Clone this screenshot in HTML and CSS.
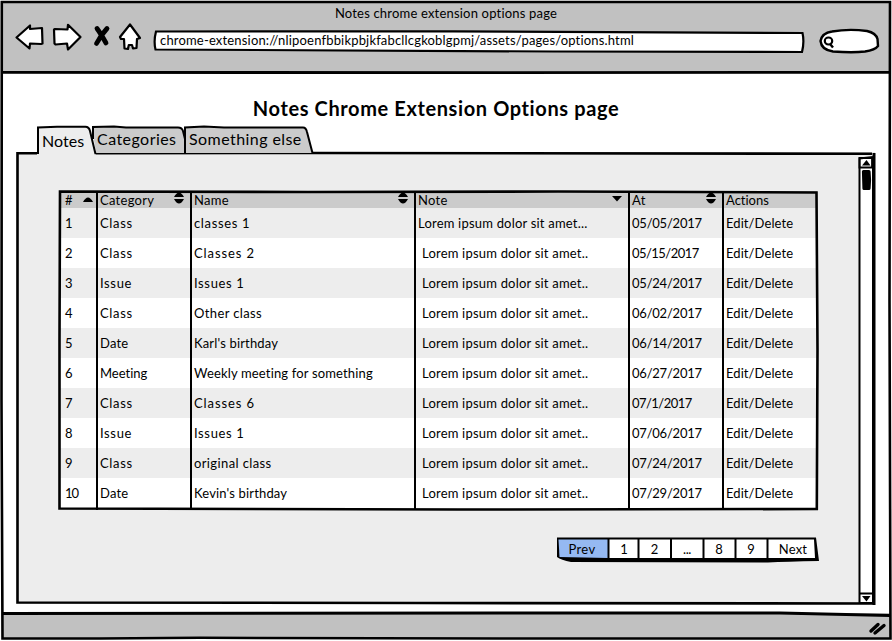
FILE: index.html
```html
<!DOCTYPE html>
<html lang="en">
<head>
<meta charset="utf-8">
<title>Notes chrome extension options page</title>
<link rel="stylesheet" href="styles.css">
</head>
<body>
<div class="window">
  <header class="chrome">
    <div class="chrome-title">Notes chrome extension options page</div>
    <div class="toolbar">
      <svg class="nav" width="130" height="30" viewBox="0 0 130 30">
        <g fill="#fff" stroke="#000" stroke-width="2.2" stroke-linejoin="round">
          <path d="M1.500 14.500 15 2.500 15 6 27 5 27.500 20.500 26 21 15 20.500 14.500 25.500 Z"/>
          <path d="M39 6.500 39.500 20.500 40.500 21.500 52 20.500 53 26.500 65.500 14 53 1.800 52.500 6.500 40 6 Z"/>
          <path d="M115 1.500 105 14 106 16 109 16 109.500 25.500 113 26 113.800 22 117 22 118 25.500 121.500 25 122 16 125 15 Z"/>
        </g>
        <path d="M82 5.500Q86 11 91 20M92 5.500Q86 12 81.500 20.500" fill="none" stroke="#000" stroke-width="4.800" stroke-linecap="round"/>
      </svg>
      <div class="url">
        <svg class="sketch" width="652" height="24" viewBox="0 0 652 24">
          <path d="M3 1.500 300 1.300 649.500 3Q651.500 12 649 22L400 21.500 2.500 19.500Q.5 11 3 1.500Z" fill="#fff" stroke="#000" stroke-width="2.200"/>
        </svg>
        <span class="url-text">chrome-extension://nlipoenfbbikpbjkfabcllcgkoblgpmj/assets/pages/options.html</span>
      </div>
      <svg class="search" width="62" height="26" viewBox="0 0 62 26">
        <path d="M13 3.500Q30 .5 48 3 57 5 58.500 11L59 18Q56 22 46 23.500 34 25 14 23.500 2.500 22 1.500 13 3 5 13 3.500Z" fill="#fff" stroke="#000" stroke-width="2.400"/>
        <ellipse cx="9.500" cy="13" rx="3.700" ry="3.500" fill="none" stroke="#000" stroke-width="2.200"/>
        <path d="M11 16 14 19.500" stroke="#000" stroke-width="2.400"/>
      </svg>
    </div>
  </header>
  <main class="page">
    <h1>Notes Chrome Extension Options page</h1>
    <nav class="tabs">
      <a class="tab tab-notes">
        <svg class="sketch" width="59" height="31" viewBox="0 0 59 31"><path d="M1 31V1.500L20 .5H48Q52 .5 53 5L58.500 27V31Z" fill="#ededed"/><path d="M1 28V1.500L20 .7H48Q52 .5 53 5L58.500 28" fill="none" stroke="#000" stroke-width="2"/></svg>
        <span class="tab-label">Notes</span>
      </a>
      <a class="tab tab-categories">
        <svg class="sketch" width="95" height="31" viewBox="0 0 95 31"><path d="M1 8V1L22 .5 34 1.500H86Q90 1.500 91 5L93 17V27H4Z" fill="#cbcbcb"/><path d="M1 13V1L22 .5 34 1.500H86Q90 1.500 91 5L94 17" fill="none" stroke="#000" stroke-width="2"/></svg>
        <span class="tab-label">Categories</span>
      </a>
      <a class="tab tab-else">
        <svg class="sketch" width="130" height="31" viewBox="0 0 130 31"><path d="M1 27V1.500L20 .5 40 1.500H119Q122 1.500 123 6L128.500 27" fill="#cbcbcb" stroke="#000" stroke-width="2"/></svg>
        <span class="tab-label">Something else</span>
      </a>
    </nav>
    <section class="panel">
      <svg class="sketch panel-frame" width="859" height="453" viewBox="0 0 859 453">
        <path d="M21 1.300H1.500V450.500L400 451 858 451.500M76 1.200 300 1 856 1.800" fill="none" stroke="#000" stroke-width="2.600"/>
        <path d="M858 1V453" stroke="#000" stroke-width="3"/>
      </svg>
      <div class="content">
        <div class="table">
          <div class="row head">
            <span>#<svg class="sort" width="10" height="5"><path d="M0 5Q5 -4 10 5Z"/></svg></span>
            <span>Category<svg class="sort both" width="10" height="12"><path d="M0 5Q5 -4 10 5ZM0 7H10Q5 16 0 7Z"/></svg></span>
            <span>Name<svg class="sort both" width="10" height="12"><path d="M0 5Q5 -4 10 5ZM0 7H10Q5 16 0 7Z"/></svg></span>
            <span>Note<svg class="sort down" width="10" height="5"><path d="M0 0H10L5 5.500Z"/></svg></span>
            <span>At<svg class="sort both" width="10" height="12"><path d="M0 5Q5 -4 10 5ZM0 7H10Q5 16 0 7Z"/></svg></span>
            <span class="plain">Actions</span>
          </div>
          <div class="row"><span>1</span><span class="wide">Class</span><span class="wide">classes 1</span><span class="first-note">Lorem ipsum dolor sit amet...</span><span>05/05/2017</span><span>Edit/Delete</span></div>
          <div class="row"><span>2</span><span class="wide">Class</span><span class="wide wider">Classes 2</span><span>Lorem ipsum dolor sit amet..</span><span class="tight">05/15/2017</span><span>Edit/Delete</span></div>
          <div class="row"><span>3</span><span class="wide">Issue</span><span class="wide">Issues 1</span><span>Lorem ipsum dolor sit amet..</span><span>05/24/2017</span><span>Edit/Delete</span></div>
          <div class="row"><span>4</span><span class="wide">Class</span><span class="mid">Other class</span><span>Lorem ipsum dolor sit amet..</span><span>06/02/2017</span><span>Edit/Delete</span></div>
          <div class="row"><span>5</span><span>Date</span><span class="name">Karl's birthday</span><span>Lorem ipsum dolor sit amet..</span><span>06/14/2017</span><span>Edit/Delete</span></div>
          <div class="row"><span>6</span><span class="meeting">Meeting</span><span class="name">Weekly meeting for something</span><span>Lorem ipsum dolor sit amet..</span><span>06/27/2017</span><span>Edit/Delete</span></div>
          <div class="row"><span>7</span><span class="wide">Class</span><span class="wide wider">Classes 6</span><span>Lorem ipsum dolor sit amet..</span><span class="tight">07/1/2017</span><span>Edit/Delete</span></div>
          <div class="row"><span>8</span><span class="wide">Issue</span><span class="wide">Issues 1</span><span>Lorem ipsum dolor sit amet..</span><span>07/06/2017</span><span>Edit/Delete</span></div>
          <div class="row"><span>9</span><span class="wide">Class</span><span class="mid">original class</span><span>Lorem ipsum dolor sit amet..</span><span>07/24/2017</span><span>Edit/Delete</span></div>
          <div class="row"><span class="ten">10</span><span>Date</span><span class="name">Kevin's birthday</span><span>Lorem ipsum dolor sit amet..</span><span>07/29/2017</span><span>Edit/Delete</span></div>
          <svg class="sketch table-frame" width="761" height="321" viewBox="0 0 761 321">
            <g fill="none" stroke="#000">
              <path d="M2 1.500 250 2 500 1.500 758.500 2.500 759.500 160 758.800 319 400 319.500 1.500 318.500V150Z" stroke-width="2.600"/>
              <path d="M39 2V320M133 2V320M357 2V320M571 2V320M665 2V320" stroke-width="2"/>
            </g>
          </svg>
        </div>
        <div class="pager">
          <svg class="sketch" width="263" height="27" viewBox="0 0 263 27">
            <path d="M1 1.500H260L263 25Q230 25.500 212 26.500L15 26Q5 24 1 21Z"/>
            <path d="M2.500 3.500H51.500V22L3.500 21Z" fill="#95b9f2"/>
            <path d="M53.500 3.500H81.500V22H53.500ZM83.500 3.500H114V22H83.500ZM116 3.500H146.500V22H116ZM148.500 3.500H178.500V22H148.500ZM180.500 3.500H210.500V22H180.500ZM212.500 3.500H258L259 22H212.500Z" fill="#fff"/>
          </svg>
          <span>Prev</span><span>1</span><span>2</span><span class="gap">...</span><span>8</span><span>9</span><span>Next</span>
        </div>
      </div>
      <svg class="scrollbar" width="17" height="448" viewBox="0 0 17 448">
        <path d="M1.500 1V446H15V1Z" fill="#fff" stroke="#000" stroke-width="2"/>
        <path d="M1.500 1.500 14 0V10.500H1.500ZM1.500 436.500H14" fill="none" stroke="#000" stroke-width="1.800"/>
        <path d="M4 8.500 8.500 3 12.500 8.500Z"/>
        <path d="M5.500 14.500 11 14.500 11.500 23 11 31.500 6 31.500Z" stroke="#000" stroke-width="3.200" stroke-linejoin="round"/>
        <path d="M4 439H12.500L8.500 444.500Z"/>
      </svg>
    </section>
  </main>
  <footer class="status">
    <svg width="20" height="14" viewBox="0 0 20 14"><path d="M3 9 10 2.500M7 11 16 3.500" stroke="#000" stroke-width="3.400" stroke-linecap="round"/></svg>
  </footer>
  <svg class="sketch window-frame" width="892" height="641" viewBox="0 0 892 641">
    <g fill="none" stroke="#000">
      <path d="M1.800 2H890L889.500 300 890.500 638.500 500 638.500 200 637.800 100 638.500H2.500L1.500 400Z" stroke-width="2.600"/>
      <path d="M2 72.300 500 72.700 890 72.300" stroke-width="2.800"/>
      <path d="M2 613.500 500 613 780 613 890 615.500" stroke-width="2.800"/>
    </g>
  </svg>
</div>
</body>
</html>
```
FILE: styles.css
```css
* { box-sizing: border-box; }

body {
  margin: 0;
  background: #fff;
  color: #000;
  font: 13px/16px Lato, "Open Sans", sans-serif;
  letter-spacing: .2px;
  font-variant-ligatures: none;
}

.window {
  position: relative;
  display: flex;
  flex-direction: column;
  width: 892px;
  height: 641px;
  padding: 2px 2px 3px;
  overflow: hidden;
}

/* Hand-drawn outlines lie over or under the boxes they belong to. */
.sketch { position: absolute; left: 0; top: 0; pointer-events: none; }
svg { display: block; flex: none; overflow: visible; }

/* Browser chrome */
.chrome { height: 70px; background: #c1c1c1; }
.chrome-title { padding-top: 3px; text-align: center; letter-spacing: .19px; }
.toolbar { display: flex; align-items: flex-start; padding-left: 13px; }
.nav { margin-top: 2px; }
.url { position: relative; width: 652px; height: 24px; margin: 9px 0 0 8px; }
.url-text { position: relative; display: block; padding: 2px 0 0 7px; white-space: nowrap; letter-spacing: .175px; }
.search { margin: 7px 0 0 14px; }

/* Page */
.page { display: flex; flex-direction: column; height: 541px; }
h1 { margin: 24px 0 0; padding-right: 20px; font-size: 20px; line-height: 24px; text-align: center; letter-spacing: .61px; }
.tabs { display: flex; margin: 6px 0 0 35px; height: 26px; position: relative; z-index: 1; }
.tab { position: relative; font-size: 16px; line-height: 20px; }
.tab-label { position: relative; white-space: nowrap; }
.tab-notes { width: 55px; padding: 5px 0 0 5px; z-index: 1; letter-spacing: .05px; }
.tab-categories { width: 92px; padding: 3px 0 0 5px; letter-spacing: .45px; }
.tab-else { width: 130px; padding: 3px 0 0 5px; letter-spacing: .43px; }
.panel { position: relative; display: flex; width: 859px; height: 452px; margin-left: 14px; background: #ededed; }
.content { width: 842px; padding: 38px 0 0 42px; }
.scrollbar { margin-top: 5px; position: relative; }

/* Notes table */
.table { position: relative; width: 761px; height: 321px; padding: 1px 2px 0 1px; }
.row { display: grid; grid-template-columns: 38px 94px 224px 214px 94px 94px; height: 30px; line-height: 30px; background: #fff; }
.row span { padding-left: 3px; white-space: nowrap; }
.row span:nth-child(1) { padding-left: 6px; }
.row span:nth-child(4) { padding-left: 7px; }
.row span:nth-child(5) { letter-spacing: -.22px; }
.row span:nth-child(6) { letter-spacing: .08px; }
.row span.wide { letter-spacing: .65px; }
.row span.wider { letter-spacing: .9px; }
.row span.mid { letter-spacing: .38px; }
.row span.name { letter-spacing: .16px; }
.row span.meeting { letter-spacing: 0; }
.row span.tight { letter-spacing: -.54px; }
.row span.ten { letter-spacing: -1px; }
.row span.first-note { padding-left: 3px; }
.row:nth-child(even) { background: #ededed; }
.row.head { height: 17px; line-height: 18px; background: #cbcbcb; }
.row.head span { display: flex; justify-content: space-between; align-items: flex-start; padding-right: 7px; letter-spacing: .28px; }
.row.head span:nth-child(4) { padding-left: 3px; }
.row.head .plain { letter-spacing: 0; }
.sort { margin-top: 6px; }
.sort.down { margin-top: 5px; }
.row.head span:nth-child(1) { padding-right: 4px; }
.sort.both { margin-top: 1px; }

/* Pagination */
.pager { position: relative; display: grid; grid-template-columns: 52px 30px 33px 32px 32px 32px 52px; width: 263px; height: 27px; margin: 25px 0 0 498px; line-height: 26px; text-align: center; }
.pager span { position: relative; }
.pager span:first-of-type { letter-spacing: .4px; }
.pager span:nth-of-type(2) { padding-left: 2px; }
.pager .gap { letter-spacing: -.4px; }

/* Status bar */
.status { display: flex; justify-content: flex-end; height: 25px; padding: 9px 2px 0 0; background: #c1c1c1; }
```
